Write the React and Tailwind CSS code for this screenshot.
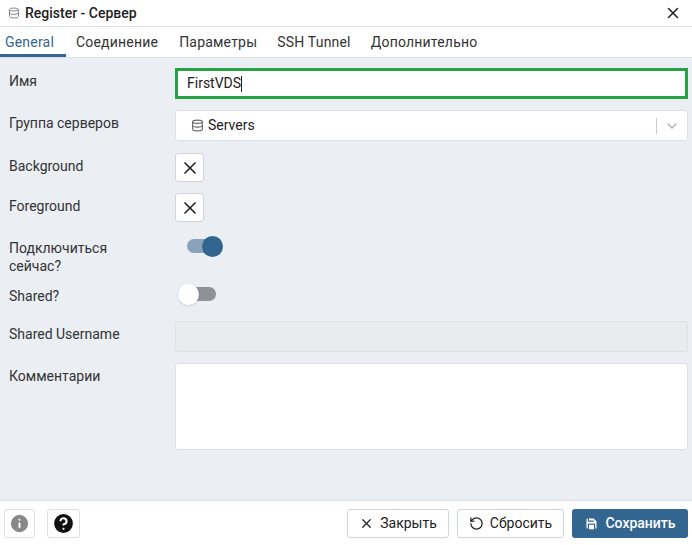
import { X, ChevronDown, RotateCcw, Save, Info, HelpCircle, Database } from "lucide-react";

const font = { fontFamily: "Roboto, 'Liberation Sans', sans-serif" };

function Row({ label, h, children }) {
  return (
    <div className={`flex ${h}`}>
      <div className="w-[175px] pl-[9px] text-[14px] text-[#333] leading-[18px] pt-[4px]">{label}</div>
      <div className="flex-1 pr-[4px]">{children}</div>
    </div>
  );
}

function XBtn() {
  return (
    <div className="w-[29px] h-[29px] bg-white border border-[#cfd4da] rounded-[3px] flex items-center justify-center">
      <X size={20} strokeWidth={2} className="text-[#222]" />
    </div>
  );
}

export default function App() {
  return (
    <div className="w-[692px] h-[545px] flex flex-col bg-[#ebeef3] overflow-hidden" style={font}>
      <div className="h-[27px] bg-white flex items-center px-[8px] border-b border-[#dde0e6]">
        <Database size={12} className="text-[#888] mr-[5px]" />
        <span className="text-[14px] text-[#222] font-medium flex-1">Register - Сервер</span>
        <X size={18} strokeWidth={2} className="text-[#222] mr-[2px]" />
      </div>
      <div className="h-[31px] bg-white flex text-[14px] text-[#333] border-b border-[#dde0e6] tracking-[0.2px]">
        <div className="px-[5px] w-[66px] flex items-center text-[#326690] border-b-[3px] border-[#326690] pt-[3px]">General</div>
        <div className="pl-[10px] pr-[14px] flex items-center">Соединение</div>
        <div className="px-[7px] pr-[13px] flex items-center">Параметры</div>
        <div className="px-[7px] pr-[13px] flex items-center">SSH Tunnel</div>
        <div className="px-[7px] flex items-center">Дополнительно</div>
      </div>
      <div className="flex-1 flex flex-col pt-[10px]">
        <Row label="Имя" h="h-[42px]">
          <div className="h-[31px] bg-white border-[3px] border-[#25a244] flex items-center px-[9px] text-[14px] text-[#222]">
            FirstVDS<span className="w-px h-[16px] bg-[#222]" />
          </div>
        </Row>
        <Row label="Группа серверов" h="h-[43px]">
          <div className="h-[31px] bg-white border border-[#dde0e6] rounded-[3px] flex items-center pl-[15px] text-[14px] text-[#222]">
            <Database size={13} className="text-[#666] mr-[4px]" />
            <span className="flex-1">Servers</span>
            <span className="w-px h-[16px] bg-[#ccc]" />
            <ChevronDown size={16} className="text-[#aaa] mx-[7px]" />
          </div>
        </Row>
        <Row label="Background" h="h-[40px]"><XBtn /></Row>
        <Row label="Foreground" h="h-[42px]"><XBtn /></Row>
        <Row label={<>Подключиться<br />сейчас?</>} h="h-[48px]">
          <div className="mt-[0px] ml-[12px] relative w-[36px] h-[22px] flex items-center">
            <div className="w-[32px] h-[14px] rounded-full bg-[#8aa3bb]" />
            <div className="absolute right-[0px] w-[21px] h-[21px] rounded-full bg-[#326690]" />
          </div>
        </Row>
        <Row label="Shared?" h="h-[38px]">
          <div className="ml-[3px] relative w-[40px] h-[22px] flex items-center">
            <div className="ml-[6px] w-[32px] h-[14px] rounded-full bg-[#8e9197]" />
            <div className="absolute left-0 w-[21px] h-[21px] rounded-full bg-white shadow" />
          </div>
        </Row>
        <Row label="Shared Username" h="h-[42px]">
          <div className="h-[31px] bg-[#e9ecef] border border-[#dde0e6] rounded-[3px]" />
        </Row>
        <Row label="Комментарии" h="h-[90px]">
          <div className="h-[87px] bg-white border border-[#dde0e6] rounded-[3px]" />
        </Row>
      </div>
      <div className="h-[45px] bg-white flex items-center px-[4px] gap-[12px] border-t border-[#dde0e6]">
        <div className="w-[31px] h-[29px] border border-[#dde0e6] rounded-[3px] flex items-center justify-center">
          <Info size={23} fill="#888" className="text-white" />
        </div>
        <div className="w-[33px] h-[29px] border border-[#dde0e6] rounded-[3px] flex items-center justify-center">
          <HelpCircle size={25} fill="#111" className="text-white" />
        </div>
        <div className="flex-1" />
        <div className="flex gap-[8px]">
          <div className="w-[102px] h-[29px] border border-[#cfd4da] rounded-[3px] flex items-center justify-center gap-[6px] text-[14px] text-[#222]">
            <X size={15} strokeWidth={2} />Закрыть
          </div>
          <div className="w-[107px] h-[29px] border border-[#cfd4da] rounded-[3px] flex items-center justify-center gap-[6px] text-[14px] text-[#222]">
            <RotateCcw size={15} strokeWidth={2} />Сбросить
          </div>
          <div className="w-[116px] h-[29px] bg-[#326690] rounded-[3px] flex items-center justify-center gap-[6px] text-[14px] text-white font-medium">
            <Save size={15} fill="white" className="text-[#326690]" />Сохранить
          </div>
        </div>
      </div>
    </div>
  );
}
